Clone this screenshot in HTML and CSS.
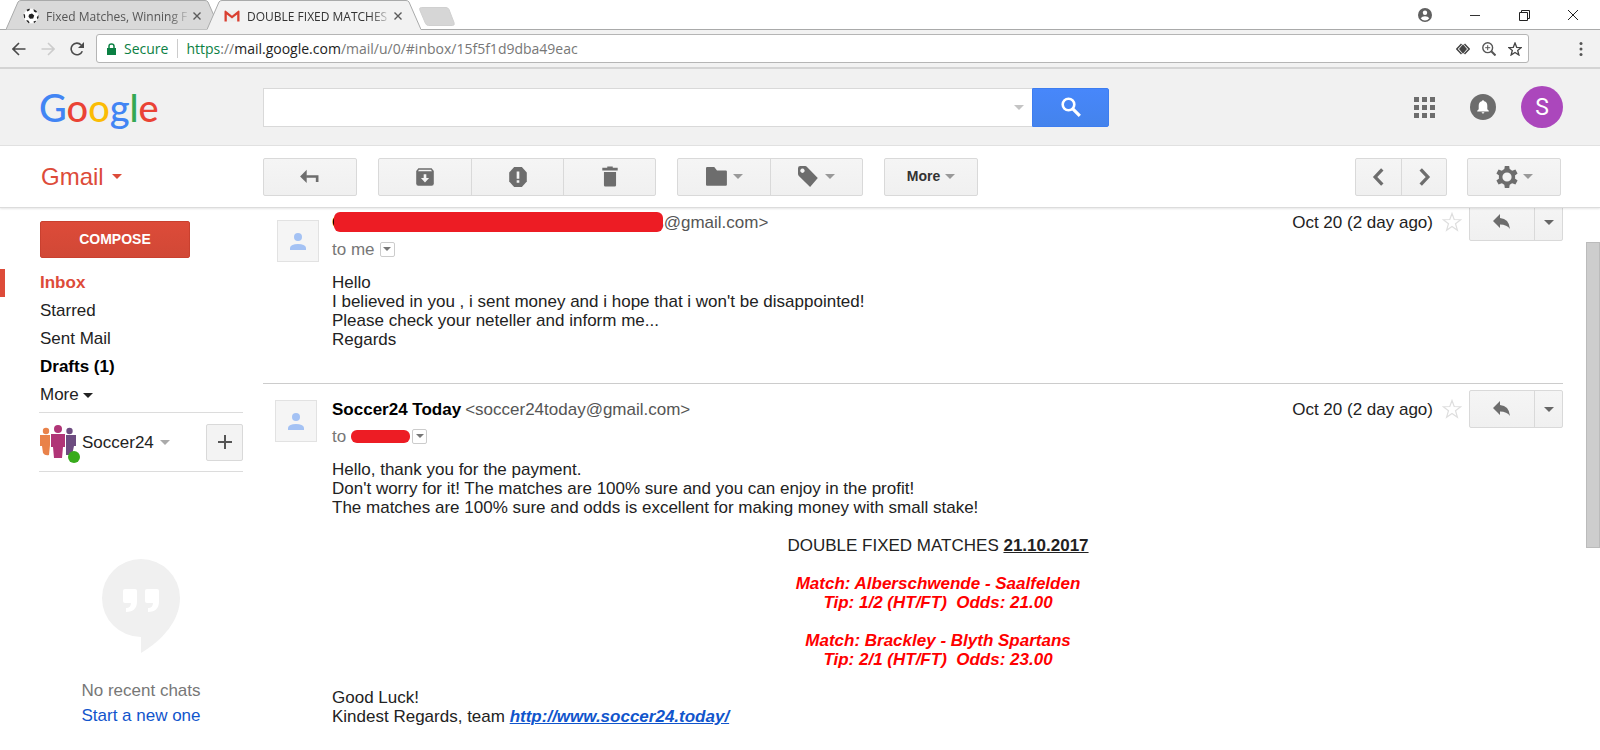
FILE: index.html
```html
<!DOCTYPE html>
<html lang="en">
<head>
  <meta charset="UTF-8" />
  <title>DOUBLE FIXED MATCHES - Gmail</title>
  <link rel="stylesheet" href="styles.css">
</head>
<body>

  <!-- Browser window -->
  <div class="tab-strip">
    <div class="tab">
      <svg class="tab-shape" viewBox="0 0 214 30" aria-hidden="true"><path d="M0 29.500 L12 2 Q13 .5 15 .5 H199 Q201 .5 202 2 L214 29.500" fill="#d9d9d9" stroke="#a9aaaa"/></svg>
      <svg class="favicon" viewBox="0 0 16 16" aria-hidden="true"><circle cx="8" cy="8" r="7.500" fill="#fff" stroke="#e4e4e4"/><path d="M6 6.500l3-1 2.200 2-1 3-3.200.3-1.500-2zM3.500 1.800l3-1.300.3 1.500-2.200 1.600zM10.500.9l3.500 2.300-.8 1.600-2.300-1.300zM.5 6l1.500.6.2 2.800-1 1.200zM15.500 7v3l-1.200 1.200-.5-2zM3 12.500l2-.3 1.500 2-.5 1.300zM10.500 13.500l2-.8.6.6-2 1.900z" fill="#222"/></svg>
      <span class="tab-title">Fixed Matches, Winning F</span>
      <button class="tab-close" aria-label="Close tab"><svg viewBox="0 0 10 10"><path d="M1.500 1.500l7 7M8.500 1.500l-7 7" stroke="#5a5a5a" stroke-width="1.400"/></svg></button>
    </div>
    <div class="tab active">
      <svg class="tab-shape" viewBox="0 0 214 30" aria-hidden="true"><path d="M0 29.500 L12 2 Q13 .5 15 .5 H199 Q201 .5 202 2 L214 29.500 V31 H0z" fill="#f2f2f2" stroke="none"/><path d="M0 29.500 L12 2 Q13 .5 15 .5 H199 Q201 .5 202 2 L214 29.500" fill="none" stroke="#a9aaaa"/></svg>
      <svg class="favicon" viewBox="0 0 16 16" aria-hidden="true"><path d="M2 3h12v10.500H2z" fill="#eee"/><path d="M.5 13.500V3.500Q.5 2.500 1.500 2.500L8 7.800l6.500-5.300q1 0 1 1v10h-2.300V6.500L8 10.600 2.800 6.500v7z" fill="#d93f30"/></svg>
      <span class="tab-title">DOUBLE FIXED MATCHES</span>
      <button class="tab-close" aria-label="Close tab"><svg viewBox="0 0 10 10"><path d="M1.500 1.500l7 7M8.500 1.500l-7 7" stroke="#5a5a5a" stroke-width="1.400"/></svg></button>
    </div>
    <button class="new-tab" aria-label="New tab"><svg viewBox="0 0 36 19"><path d="M2.500.5H27q2 0 3 2l5 13q1 3-1.500 3H9.500q-2 0-3-2L.8 3Q0 .5 2.500.5z" fill="#d6d6d6" stroke="#d0d0d0"/></svg></button>
    <div class="window-buttons">
      <button class="win-user" aria-label="User"><svg viewBox="0 0 14 14"><circle cx="7" cy="7" r="7" fill="#606060"/><circle cx="7" cy="4.800" r="2.200" fill="#fff"/><path d="M2.700 10.200Q4 8.200 7 8.200t4.300 2Q9.600 12.500 7 12.500t-4.300-2.300z" fill="#fff"/></svg></button>
      <button aria-label="Minimize"><svg viewBox="0 0 12 12"><path d="M1 6.500h10" stroke="#333"/></svg></button>
      <button aria-label="Restore"><svg viewBox="0 0 12 12"><path d="M1.500 3.500h8v8h-8zM3.500 3.500v-2h8v8h-2" fill="none" stroke="#222"/></svg></button>
      <button aria-label="Close"><svg viewBox="0 0 12 12"><path d="M1 1l10 10M11 1L1 11" stroke="#222"/></svg></button>
    </div>
  </div>

  <div class="address-row">
    <button aria-label="Back"><svg viewBox="0 0 14 14"><path d="M13.500 7H1M7 1L1 7l6 6" fill="none" stroke="#4a4a4a" stroke-width="1.600"/></svg></button>
    <button aria-label="Forward"><svg viewBox="0 0 14 14"><path d="M.5 7H13M7 1l6 6-6 6" fill="none" stroke="#ccc" stroke-width="1.600"/></svg></button>
    <button aria-label="Reload"><svg viewBox="0 0 14 14"><path d="M12.300 9.200A5.800 5.800 0 1 1 11.200 3" fill="none" stroke="#4a4a4a" stroke-width="1.600"/><path d="M14 0v6H8z" fill="#4a4a4a"/></svg></button>
    <div class="omnibox">
      <svg class="lock" viewBox="0 0 9 12" aria-hidden="true"><path d="M0 5h9v7H0z" fill="#0b8043"/><path d="M2 5.500V3.200Q2 1 4.500 1T7 3.200v2.300" fill="none" stroke="#0b8043" stroke-width="1.500"/></svg>
      <span class="secure">Secure</span>
      <div class="url" role="textbox" aria-label="Address"><span class="scheme">https</span>://<span class="host">mail.google.com</span>/mail/u/0/#inbox/15f5f1d9dba49eac</div>
      <button aria-label="Site info"><svg viewBox="0 0 14 14"><path d="M5.500 2L.8 7l4.700 5M8.500 2l4.700 5-4.700 5" fill="none" stroke="#444" stroke-width="1.500"/><path d="M7 2.200L11 7l-4 4.800L3 7z" fill="#444"/></svg></button>
      <button aria-label="Zoom"><svg viewBox="0 0 14 14"><circle cx="5.700" cy="5.700" r="4.900" fill="none" stroke="#555" stroke-width="1.400"/><path d="M9.300 9.300l4.200 4.200" stroke="#555" stroke-width="2"/><path d="M3.200 5.700h5M5.700 3.200v5" stroke="#555"/></svg></button>
      <button aria-label="Bookmark"><svg viewBox="0 0 14 14"><path d="M7 1l1.700 4.300 4.600.3-3.600 2.900 1.200 4.500L7 10.500 3.100 13l1.200-4.500L.7 5.600l4.600-.3z" fill="none" stroke="#444" stroke-width="1.300"/></svg></button>
    </div>
    <button class="menu" aria-label="Menu"><svg viewBox="0 0 14 14"><g fill="#555"><circle cx="7" cy="1.500" r="1.500"/><circle cx="7" cy="7" r="1.500"/><circle cx="7" cy="12.500" r="1.500"/></g></svg></button>
  </div>

  <!-- Google bar -->
  <header class="google-bar">
    <a class="logo" href="#" aria-label="Google"><span class="blue">G</span><span class="red">o</span><span class="yellow">o</span><span class="blue">g</span><span class="green">l</span><span class="red">e</span></a>
    <form class="search">
      <div class="search-box">
        <input type="text" aria-label="Search mail">
        <button type="button" class="search-options" aria-label="Search options"><i class="caret"></i></button>
      </div>
      <button type="button" class="search-button" aria-label="Search"><svg viewBox="0 0 20 20"><circle cx="7.500" cy="7.500" r="5.800" fill="none" stroke="#fff" stroke-width="2.600"/><path d="M11.800 11.800l7 7" stroke="#fff" stroke-width="3.200"/></svg></button>
    </form>
    <div class="account">
      <button aria-label="Apps"><svg class="apps" viewBox="0 0 21 21"><path d="M0 0h5v5H0zM8 0h5v5H8zM16 0h5v5h-5zM0 8h5v5H0zM8 8h5v5H8zM16 8h5v5h-5zM0 16h5v5H0zM8 16h5v5H8zM16 16h5v5h-5z" fill="#6d6d6d"/></svg></button>
      <button aria-label="Notifications"><svg class="bell" viewBox="0 0 26 26"><circle cx="13" cy="13" r="13" fill="#6d6d6d"/><path d="M13 6.300q1 0 1.200 1 3.100.8 3.100 4.500v3.400l1.500 1.500v.9H7.200v-.9l1.500-1.500v-3.400q0-3.700 3.100-4.500.2-1 1.200-1zM11.600 18.300h2.800q-.2 1.300-1.400 1.300t-1.400-1.300z" fill="#fff"/></svg></button>
      <button class="user">S</button>
    </div>
  </header>

  <!-- Mail toolbar -->
  <div class="toolbar">
    <button class="gmail">Gmail <i class="caret"></i></button>
    <div class="actions">
      <div class="group">
        <button aria-label="Back to inbox"><svg viewBox="0 0 20 20"><path d="M6.500 9.500h10v5" fill="none" stroke="#6d6d6d" stroke-width="2.400"/><path d="M1 9.500l6-6v12z" fill="#6d6d6d"/></svg></button>
      </div>
      <div class="group">
        <button aria-label="Archive"><svg viewBox="0 0 20 20"><path d="M4 2h12l2 2.500V16q0 2-2 2H4q-2 0-2-2V4.500z" fill="#6d6d6d"/><path d="M4.500 3.500h11l.8 1.200H3.700z" fill="#f3f3f3"/><path d="M8.800 7.500h2.400v3.500h2.500L10 15l-3.700-4h2.500z" fill="#f3f3f3"/></svg></button>
        <button aria-label="Report spam"><svg viewBox="0 0 20 20"><path d="M6.500 1h7L18 6v8l-4.500 5h-7L2 14V6z" fill="#6d6d6d"/><path d="M8.800 5h2.400v6.500H8.800zM8.800 13h2.400v2.300H8.800z" fill="#f3f3f3"/></svg></button>
        <button aria-label="Delete"><svg viewBox="0 0 20 20"><path d="M3 1.500h4.500V.5h5v1H17v2.500H3zM4.500 5.500h11v12q0 1.200-1.200 1.200H5.700q-1.200 0-1.200-1.200z" fill="#6d6d6d"/></svg></button>
      </div>
      <div class="group">
        <button aria-label="Move to"><svg viewBox="0 0 20 20"><path d="M0 2q0-1 1-1h6.500l2.500 3h8q1 0 1 1v12q0 1-1 1H1q-1 0-1-1z" fill="#6d6d6d"/></svg><i class="caret"></i></button>
        <button aria-label="Labels"><svg viewBox="0 0 20 20"><path fill-rule="evenodd" d="M0 2Q0 0 2 0h4.500q1 0 1.700.8l9.800 10.200-7 8L.8 9Q0 8.200 0 7zM4 2.300a2 2 0 1 0 .1 0z" fill="#6d6d6d"/></svg><i class="caret"></i></button>
      </div>
      <div class="group">
        <button>More<i class="caret"></i></button>
      </div>
    </div>
    <div class="group pager">
      <button aria-label="Newer"><svg viewBox="0 0 20 20"><path d="M13 3L6.500 10l6.500 7" fill="none" stroke="#6d6d6d" stroke-width="3"/></svg></button>
      <button aria-label="Older"><svg viewBox="0 0 20 20"><path d="M7 3l6.500 7L7 17" fill="none" stroke="#6d6d6d" stroke-width="3"/></svg></button>
    </div>
    <div class="group">
      <button aria-label="Settings"><svg viewBox="0 0 22 22"><circle cx="11" cy="11" r="6.400" fill="none" stroke="#6d6d6d" stroke-width="3.600"/><path d="M8.800 0h4.400l.6 4H8.200zM8.800 22h4.400l.6-4H8.200zM.4 7.400l2.200-3.800 3.800 1.500-2.800 4.800zM21.600 14.600l-2.200 3.800-3.800-1.500 2.800-4.800zM.4 14.600l2.200 3.800 3.800-1.500-2.800-4.800zM21.600 7.400l-2.200-3.800-3.800 1.500 2.800 4.800z" fill="#6d6d6d"/></svg><i class="caret"></i></button>
    </div>
  </div>

  <div class="content">
    <aside class="sidebar">
      <button class="compose">COMPOSE</button>
      <nav class="folders">
        <a href="#" class="current">Inbox</a>
        <a href="#">Starred</a>
        <a href="#">Sent Mail</a>
        <a href="#" class="unread">Drafts (1)</a>
        <a href="#">More <i class="caret"></i></a>
      </nav>
      <div class="profile">
        <span class="profile-picture">
          <svg viewBox="0 0 36 34" aria-hidden="true"><g fill="#e9824a"><circle cx="6" cy="6" r="3.200"/><path d="M0 10h10v10l-1 10q-4 1-6-2L2 21H0z"/></g><g fill="#6d4c80"><circle cx="29.500" cy="6" r="3.200"/><path d="M26 10h10v11h-2l-2 9h-6z"/></g><g fill="#b03577"><circle cx="18" cy="4" r="4"/><path d="M11 9h14v13h-2l-1 11h-8l-1-11h-2z"/></g></svg>
          <span class="status"></span>
        </span>
        <button class="profile-name">Soccer24 <i class="caret"></i></button>
        <button class="add" aria-label="New conversation"><svg viewBox="0 0 14 14"><path d="M0 7h14M7 0v14" stroke="#555" stroke-width="2"/></svg></button>
      </div>
      <div class="chats">
        <svg viewBox="0 0 78 94" aria-hidden="true"><path d="M39 0a39 39 0 0 1 39 39c0 22-17 42-39 55V78A39 39 0 0 1 39 0z" fill="#f0f0f0"/><path d="M23 30h10q2 0 2 2v10q0 11-11 11v-4q5 0 5-5h-6q-2 0-2-2V32q0-2 2-2zM45 30h10q2 0 2 2v10q0 11-11 11v-4q5 0 5-5h-6q-2 0-2-2V32q0-2 2-2z" fill="#fff"/></svg>
        <p>No recent chats</p>
        <a href="#">Start a new one</a>
      </div>
    </aside>

    <main class="thread">
      <article class="message first">
        <div class="avatar"><svg viewBox="0 0 16 17" aria-hidden="true"><circle cx="8" cy="4" r="4" fill="#a4c2f4"/><path d="M0 17v-2.500Q1 11 8 11t8 3.500V17z" fill="#a4c2f4"/></svg></div>
        <div class="message-main">
          <div class="message-head">
            <div class="sender"><b>G</b><span class="redacted long"></span><span class="email">s@gmail.com&gt;</span></div>
            <span class="date">Oct 20 (2 day ago)</span>
            <button class="star" aria-label="Star"><svg viewBox="0 0 20 20"><path d="M10 1.500l2.200 6 6.500.2-5.200 4 1.900 6.500-5.400-3.800-5.400 3.800 1.900-6.500-5.200-4 6.500-.2z" fill="none" stroke="#dedede" stroke-width="1.200"/></svg></button>
            <div class="group reply">
              <button aria-label="Reply"><svg viewBox="0 0 18 16"><path d="M0 7l7-7v4q9 .5 10 11-3-4.500-10-4.500V14z" fill="#6d6d6d"/></svg></button>
              <button aria-label="More options"><i class="caret"></i></button>
            </div>
          </div>
          <div class="recipient">to me <button aria-label="Show details"><i class="caret"></i></button></div>
          <div class="message-body">
            Hello<br>
            I believed in you , i sent money and i hope that i won't be disappointed!<br>
            Please check your neteller and inform me...<br>
            Regards
          </div>
        </div>
      </article>

      <article class="message">
        <div class="avatar"><svg viewBox="0 0 16 17" aria-hidden="true"><circle cx="8" cy="4" r="4" fill="#a4c2f4"/><path d="M0 17v-2.500Q1 11 8 11t8 3.500V17z" fill="#a4c2f4"/></svg></div>
        <div class="message-main">
          <div class="message-head">
            <div class="sender"><b>Soccer24 Today</b> <span class="email">&lt;soccer24today@gmail.com&gt;</span></div>
            <span class="date">Oct 20 (2 day ago)</span>
            <button class="star" aria-label="Star"><svg viewBox="0 0 20 20"><path d="M10 1.500l2.200 6 6.500.2-5.200 4 1.900 6.500-5.400-3.800-5.400 3.800 1.900-6.500-5.200-4 6.500-.2z" fill="none" stroke="#dedede" stroke-width="1.200"/></svg></button>
            <div class="group reply">
              <button aria-label="Reply"><svg viewBox="0 0 18 16"><path d="M0 7l7-7v4q9 .5 10 11-3-4.500-10-4.500V14z" fill="#6d6d6d"/></svg></button>
              <button aria-label="More options"><i class="caret"></i></button>
            </div>
          </div>
          <div class="recipient">to <span class="redacted"></span><button aria-label="Show details"><i class="caret"></i></button></div>
          <div class="message-body">
            <p>Hello, thank you for the payment.<br>
            Don't worry for it! The matches are 100% sure and you can enjoy in the profit!<br>
            The matches are 100% sure and odds is excellent for making money with small stake!</p>
            <p class="center">DOUBLE FIXED MATCHES <b><u>21.10.2017</u></b></p>
            <p class="center tip">Match: Alberschwende - Saalfelden<br>Tip: 1/2 (HT/FT)&nbsp; Odds: 21.00</p>
            <p class="center tip">Match: Brackley - Blyth Spartans<br>Tip: 2/1 (HT/FT)&nbsp; Odds: 23.00</p>
            <p>Good Luck!<br>
            Kindest Regards, team <a href="#">http://www.soccer24.today/</a></p>
          </div>
        </div>
      </article>
    </main>

    <div class="scrollbar"><div class="thumb"></div></div>
  </div>

</body>
</html>
```

FILE: styles.css
```css
:root {
  --red: #dd4b39;
  --border: #d9d9d9;
  --marker: #ed1c24;
}

* {
  box-sizing: border-box;
}

body {
  margin: 0;
  height: 100vh;
  display: flex;
  flex-direction: column;
  overflow: hidden;
  background: #fff;
  color: #222;
  font-family: "Liberation Sans", Arial, sans-serif;
  font-size: 17px;
  line-height: 19px;
}

button {
  display: flex;
  align-items: center;
  justify-content: center;
  padding: 0;
  border: none;
  background: none;
  font: inherit;
  color: inherit;
  cursor: pointer;
}

a {
  color: inherit;
  text-decoration: none;
}

p {
  margin: 0;
}

svg {
  display: block;
  flex: none;
}

.caret {
  display: inline-block;
  flex: none;
  border: 5px solid transparent;
  border-top-color: currentColor;
  border-bottom: none;
}

/* browser window */
.tab-strip {
  display: flex;
  flex: none;
  height: 30px;
  padding-left: 6px;
  border-bottom: 1px solid #a9aaaa;
  font-family: "Open Sans", "Noto Sans", sans-serif;
  font-size: 12px;
}

.tab {
  position: relative;
  display: flex;
  align-items: center;
  width: 214px;
  height: 30px;
  padding: 2px 18px 0 17px;
  color: #555;
}

.tab.active {
  margin-left: -13px;
  color: #333;
}

.tab-shape {
  position: absolute;
  left: 0;
  top: 0;
  width: 214px;
  height: 30px;
}

.tab > :not(.tab-shape) {
  position: relative;
}

.favicon {
  width: 16px;
  height: 16px;
}

.tab-title {
  flex: 1;
  margin: 0 1px 0 7px;
  white-space: nowrap;
  -webkit-mask-image: linear-gradient(to right, #000 85%, transparent);
  mask-image: linear-gradient(to right, #000 85%, transparent);
}

.tab-close svg {
  width: 10px;
  height: 10px;
}

.new-tab {
  margin: 7px 0 0 -2px;
  height: 19px;
}

.new-tab svg {
  width: 36px;
  height: 19px;
}

.window-buttons {
  display: flex;
  align-items: center;
  gap: 37px;
  margin-left: auto;
  padding-right: 21px;
}

.window-buttons svg {
  width: 12px;
  height: 12px;
}

.window-buttons .win-user svg {
  width: 14px;
  height: 14px;
}

.address-row {
  display: flex;
  flex: none;
  align-items: center;
  gap: 15px;
  height: 39px;
  padding: 0 12px;
  background: #f2f2f2;
  border-bottom: 2px solid #d4d4d4;
}

.address-row svg {
  width: 14px;
  height: 14px;
}

.omnibox {
  display: flex;
  flex: 1;
  align-items: center;
  gap: 12px;
  height: 29px;
  margin-left: -3px;
  padding: 0 6px 0 10px;
  background: #fff;
  border: 1px solid #b5b5b5;
  border-radius: 3px;
  font-family: "Open Sans", "Noto Sans", sans-serif;
  font-size: 14px;
}

.omnibox .lock {
  width: 9px;
  height: 12px;
  margin-right: -4px;
}

.secure,
.scheme {
  color: #0b8043;
}

.secure {
  padding-right: 9px;
  border-right: 1px solid #ccc;
}

.url {
  flex: 1;
  margin-left: -4px;
  color: #777;
}

.host {
  color: #222;
}

.address-row .menu {
  margin-left: 30px;
}

/* google bar */
.google-bar {
  display: flex;
  flex: none;
  align-items: center;
  height: 77px;
  padding: 0 37px 0 39px;
  background: #f1f1f1;
  border-bottom: 1px solid #e2e2e2;
}

.logo {
  width: 224px;
  font-family: Lato, sans-serif;
  font-size: 38px;
  font-weight: 500;
  line-height: 48px;
}

.blue { color: #4285f4; }
.red { color: #ea4335; }
.yellow { color: #fbbc05; }
.green { color: #34a853; }

.search {
  display: flex;
  flex: 0 1 846px;
  height: 39px;
}

.search-box {
  display: flex;
  flex: 1;
  background: #fff;
  border: 1px solid var(--border);
  border-right: none;
}

.search-box input {
  flex: 1;
  min-width: 0;
  padding: 0 10px;
  border: none;
  outline: none;
  background: none;
  font: inherit;
}

.search-options {
  width: 26px;
  color: #c4c4c4;
}

.search-button {
  width: 77px;
  background: linear-gradient(#4787fb, #4483ec);
  border: 1px solid #3d7df0;
  border-radius: 0 2px 2px 0;
}

.search-button svg {
  width: 20px;
  height: 20px;
}

.account {
  display: flex;
  align-items: center;
  gap: 35px;
  margin-left: auto;
}

.apps {
  width: 21px;
  height: 21px;
}

.bell {
  width: 26px;
  height: 26px;
}

.user {
  width: 42px;
  height: 42px;
  margin-left: -10px;
  border-radius: 50%;
  background: #ab47bc;
  color: #fff;
  font-family: Roboto, sans-serif;
  font-size: 23px;
}

/* mail toolbar */
.toolbar {
  position: relative;
  z-index: 1;
  display: flex;
  flex: none;
  align-items: center;
  gap: 20px;
  height: 62px;
  padding: 0 39px 0 41px;
  background: #fff;
  border-bottom: 1px solid #dcdcdc;
  box-shadow: 0 1px 2px rgba(0, 0, 0, 0.1);
}

.gmail {
  width: 202px;
  justify-content: flex-start;
  gap: 8px;
  color: var(--red);
  font-size: 24px;
  line-height: 28px;
}

.actions {
  display: flex;
  flex: 1;
  gap: 21px;
}

.group {
  display: flex;
  height: 38px;
  background: linear-gradient(#f5f5f5, #f0f0f0);
  border: 1px solid var(--border);
  border-radius: 2px;
}

.group button {
  width: 92px;
  gap: 5px;
  color: #333;
  font-size: 14px;
  font-weight: bold;
}

.group button + button {
  border-left: 1px solid var(--border);
}

.group svg {
  width: 22px;
  height: 22px;
}

.group .caret {
  color: #999;
}

.group.pager button {
  width: 45px;
}

/* sidebar */
.content {
  display: flex;
  flex: 1;
  min-height: 0;
}

.sidebar {
  width: 243px;
  padding: 13px 0 0 39px;
}

.compose {
  width: 150px;
  height: 37px;
  margin: 0 0 11px 1px;
  border: 1px solid #c9402f;
  border-radius: 2px;
  background: linear-gradient(#dd4b39, #d14836);
  color: #fff;
  font-size: 14px;
  font-weight: bold;
}

.folders {
  display: flex;
  flex-direction: column;
  margin: 0 0 3px -39px;
}

.folders a {
  padding-left: 40px;
  line-height: 28px;
}

.folders .current {
  padding-left: 35px;
  border-left: 5px solid var(--red);
  color: var(--red);
  font-weight: bold;
}

.folders .unread {
  color: #000;
  font-weight: bold;
}

.folders .caret {
  vertical-align: 2px;
}

.profile {
  display: flex;
  align-items: center;
  height: 60px;
  border-top: 1px solid #dcdcdc;
  border-bottom: 1px solid #dcdcdc;
}

.profile-picture {
  position: relative;
  margin: 0 6px 0 1px;
}

.profile-picture svg {
  width: 36px;
  height: 34px;
}

.status {
  position: absolute;
  right: -4px;
  bottom: -4px;
  width: 12px;
  height: 12px;
  border-radius: 50%;
  background: #38ab1c;
}

.profile-name {
  gap: 6px;
}

.profile-name .caret {
  color: #aaa;
}

.add {
  width: 37px;
  height: 37px;
  margin-left: auto;
  border: 1px solid var(--border);
  border-radius: 2px;
  background: #f3f3f3;
}

.add svg {
  width: 14px;
  height: 14px;
}

.chats {
  display: flex;
  flex-direction: column;
  align-items: center;
  padding-top: 87px;
  line-height: 25px;
  color: #777;
}

.chats svg {
  width: 78px;
  height: 94px;
  margin-bottom: 25px;
}

.chats a {
  color: #15c;
}

/* conversation */
.thread {
  flex: 1;
  min-width: 0;
  margin: -5px 23px 0 20px;
}

.message {
  display: flex;
  padding-top: 6px;
  border-top: 1px solid #ccc;
}

.message.first {
  padding: 0 0 34px;
  border-top: none;
}

.avatar {
  display: flex;
  align-items: center;
  justify-content: center;
  flex: none;
  width: 42px;
  height: 42px;
  margin: 10px 15px 0 12px;
  border: 1px solid #e2e2e2;
  background: #f5f5f5;
}

.first .avatar {
  margin: 17px 13px 0 14px;
}

.avatar svg {
  width: 16px;
  height: 17px;
}

.message-main {
  flex: 1;
  min-width: 0;
}

.message-head {
  display: flex;
  align-items: center;
  height: 38px;
}

.sender {
  flex: 1;
  display: flex;
  align-items: center;
  gap: 4px;
}

.first .sender {
  gap: 0;
}

.sender b {
  color: #000;
}

.email {
  color: #555;
}

.redacted {
  position: relative;
  display: inline-block;
  width: 59px;
  height: 13px;
  border-radius: 6px;
  background: var(--marker);
}

.redacted.long {
  width: 329px;
  height: 20px;
  margin: 0 -8px 0 -11px;
}

.star {
  margin: 0 7px 0 9px;
}

.star svg {
  width: 20px;
  height: 20px;
}

.reply button {
  width: 64px;
}

.reply button + button {
  width: 28px;
}

.reply svg {
  width: 18px;
  height: 16px;
}

.reply .caret {
  color: #666;
}

.recipient {
  display: flex;
  align-items: center;
  gap: 5px;
  height: 16px;
  color: #777;
}

.recipient button {
  width: 15px;
  height: 15px;
  border: 1px solid #ccc;
  border-radius: 2px;
}

.recipient .caret {
  border-width: 4px;
  border-bottom: none;
}

.recipient .redacted + button {
  margin-left: -3px;
}

.message-body {
  margin-top: 16px;
  padding-right: 19px;
}

.message-body p + p {
  margin-top: 19px;
}

.center {
  text-align: center;
}

.tip {
  color: #f00;
  font-weight: bold;
  font-style: italic;
}

.message-body a {
  color: #15c;
  font-weight: bold;
  font-style: italic;
  text-decoration: underline;
}

.scrollbar {
  width: 14px;
  padding-top: 34px;
}

.thumb {
  height: 306px;
  background: #cdcdcd;
  border: 1px solid #bbb;
}
```
